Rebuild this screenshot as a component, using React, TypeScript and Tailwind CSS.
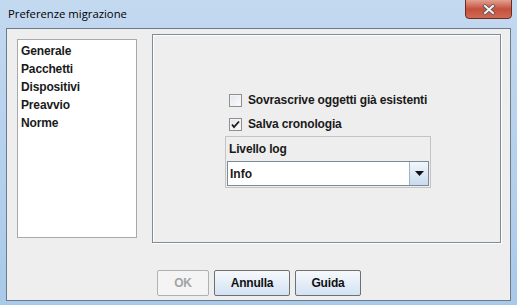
import React from "react";

const font = { fontFamily: '"Liberation Sans", Arial, sans-serif' };

function Check({ checked }: { checked?: boolean }) {
  return (
    <div className="w-[13px] h-[13px] border border-[#8f8f8f] bg-gradient-to-br from-[#dcdcdc] to-[#ffffff] flex items-center justify-center">
      <div className="w-[11px] h-[11px] border border-[#f4f4f4] bg-gradient-to-br from-[#e3e7ed] to-[#f9fafb] flex items-center justify-center">
        {checked && (
          <svg width="9" height="9" viewBox="0 0 9 9">
            <path d="M1 4.5 L3 7 L8 1.5" stroke="#1a1a1a" strokeWidth="1.8" fill="none" />
          </svg>
        )}
      </div>
    </div>
  );
}

function Btn({ label, disabled, w }: { label: string; disabled?: boolean; w: string }) {
  return (
    <div
      className={
        "h-[26px] flex items-center justify-center rounded-[2px] text-[12px] font-bold tracking-[-0.2px] " +
        w +
        (disabled
          ? " border border-[#adb2b5] bg-[#f4f4f4] text-[#a3a3a3]"
          : " border border-[#707070] bg-gradient-to-b from-[#f6f9fd] to-[#d3e2f2] text-[#111]")
      }
    >
      {label}
    </div>
  );
}

export default function App() {
  return (
    <div
      className="w-[517px] h-[305px] relative overflow-hidden bg-gradient-to-b from-[#c3d9f0] to-[#a9c9ea]"
      style={font}
    >
      {/* title bar */}
      <div className="h-[28px] flex items-center pl-[8px] relative">
        <span
          className="text-[11.3px] text-black"
          style={{ fontFamily: '"Open Sans", "Noto Sans", sans-serif' }}
        >
          Preferenze migrazione
        </span>
        <div className="absolute right-[5px] top-[-1px] w-[47px] h-[20px] rounded-b-[4px] border border-[#6e2a22] bg-gradient-to-b from-[#e2a090] via-[#c4503e] to-[#cf6a52] flex items-center justify-center">
          <svg width="14" height="11" viewBox="0 0 14 11">
            <path
              d="M3 2 L11 9 M11 2 L3 9"
              stroke="#555"
              strokeWidth="3.6"
              strokeLinecap="square"
            />
            <path
              d="M3 2 L11 9 M11 2 L3 9"
              stroke="#f4f4f4"
              strokeWidth="2"
              strokeLinecap="square"
            />
          </svg>
        </div>
      </div>

      {/* client area */}
      <div className="mx-[6px] h-[273px] border border-[#6c7a89] bg-[#eeeeee] flex flex-col">
        <div className="flex items-start">
          {/* list */}
          <div className="ml-[10px] mt-[10px] w-[120px] h-[199px] border border-[#a9a9a9] bg-white pt-[2px] pl-[3px]">
            {["Generale", "Pacchetti", "Dispositivi", "Preavvio", "Norme"].map((t) => (
              <div key={t} className="h-[18px] leading-[18px] text-[12px] font-bold tracking-[-0.15px] text-[#1a1a1a]">
                {t}
              </div>
            ))}
          </div>

          {/* right panel */}
          <div className="ml-[15px] mt-[5px] w-[349px] h-[209px] border border-[#7f8b97] shadow-[inset_1px_1px_0_#ffffff,1px_1px_0_#ffffff]">
            <div className="ml-[76px] mt-[58px] flex flex-col">
              <div className="flex items-center h-[14px]">
                <Check />
                <span className="ml-[6px] text-[12px] font-bold tracking-[-0.15px] text-[#1a1a1a]">
                  Sovrascrive oggetti già esistenti
                </span>
              </div>
              <div className="flex items-center h-[14px] mt-[10px]">
                <Check checked />
                <span className="ml-[6px] text-[12px] font-bold tracking-[-0.15px] text-[#1a1a1a]">Salva cronologia</span>
              </div>
            </div>
            <div className="ml-[72px] mt-[5px] w-[206px] border border-[#c4c4c4] px-[1px] pb-[1px]">
              <div className="h-[24px] flex items-center pl-[2px] text-[12px] font-bold tracking-[-0.15px] text-[#1a1a1a]">
                Livello log
              </div>
              <div className="h-[25px] border border-[#7a8a99] bg-white flex">
                <div className="flex-1 flex items-center pl-[2px] text-[12px] font-bold text-[#1a1a1a]">
                  Info
                </div>
                <div className="w-[19px] border-l border-[#a2b2c2] bg-gradient-to-b from-[#f2f7fc] to-[#c9dbee] flex items-center justify-center">
                  <svg width="9" height="5" viewBox="0 0 9 5">
                    <path d="M0 0 H9 L4.5 5 Z" fill="#111" />
                  </svg>
                </div>
              </div>
            </div>
          </div>
        </div>

        {/* buttons */}
        <div className="mt-[27px] flex justify-center gap-[5px] pl-[1px]">
          <Btn label="OK" disabled w="w-[52px]" />
          <Btn label="Annulla" w="w-[76px]" />
          <Btn label="Guida" w="w-[66px]" />
        </div>
      </div>
    </div>
  );
}
